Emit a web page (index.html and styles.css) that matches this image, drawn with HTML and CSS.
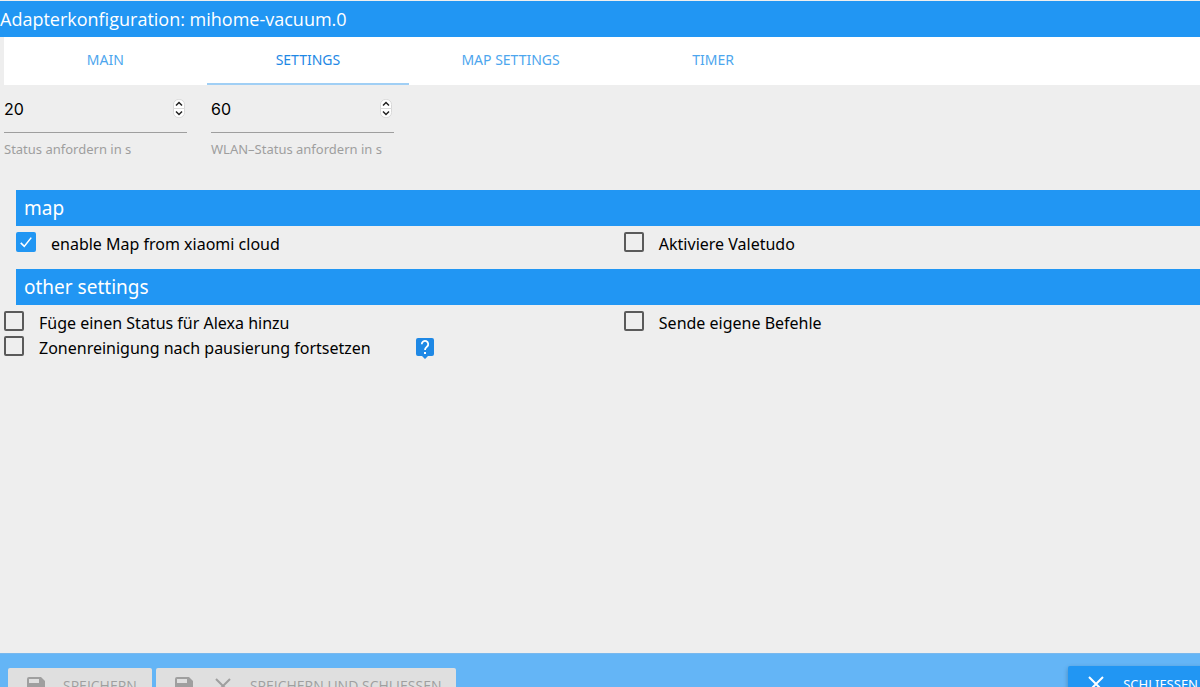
FILE: index.html
```html
<!DOCTYPE html>
<html lang="de">
<head>
<meta charset="utf-8">
<title>Adapterkonfiguration</title>
<link rel="stylesheet" href="styles.css">
</head>
<body>
<div class="page">
  <header class="titlebar"><h1 class="title">Adapterkonfiguration: mihome-vacuum.0</h1></header>
  <nav class="tabs">
    <a class="tab" href="#main">MAIN</a>
    <a class="tab tab-active" href="#settings">SETTINGS</a>
    <a class="tab" href="#map">MAP SETTINGS</a>
    <a class="tab" href="#timer">TIMER</a>
  </nav>
  <main class="content">
    <div class="fields">
      <div class="field">
        <div class="field-box">
          <input class="number" id="status" type="number" value="20">
          <svg class="spinner" viewBox="0 0 12 19" aria-hidden="true"><rect x=".5" y=".5" width="11" height="18" rx="5" fill="#fff" stroke="#d8d8d8"/><path d="M0 9.5h12" stroke="#dcdcdc"/><path d="M3 6.500 6 3.500l3 3M3 12.500l3 3 3-3" fill="none" stroke="#222" stroke-width="1.500"/></svg>
        </div>
        <label class="field-label" for="status">Status anfordern in s</label>
      </div>
      <div class="field">
        <div class="field-box">
          <input class="number" id="wlan" type="number" value="60">
          <svg class="spinner" viewBox="0 0 12 19" aria-hidden="true"><rect x=".5" y=".5" width="11" height="18" rx="5" fill="#fff" stroke="#d8d8d8"/><path d="M0 9.5h12" stroke="#dcdcdc"/><path d="M3 6.500 6 3.500l3 3M3 12.500l3 3 3-3" fill="none" stroke="#222" stroke-width="1.500"/></svg>
        </div>
        <label class="field-label" for="wlan">WLAN–Status anfordern in s</label>
      </div>
    </div>
    <h2 class="section">map</h2>
    <div class="options">
      <label class="option option-indent"><input class="check" type="checkbox" checked><span>enable Map from xiaomi cloud</span></label>
      <label class="option"><input class="check" type="checkbox"><span>Aktiviere Valetudo</span></label>
    </div>
    <h2 class="section">other settings</h2>
    <div class="options">
      <label class="option"><input class="check" type="checkbox"><span>Füge einen Status für Alexa hinzu</span></label>
      <label class="option"><input class="check" type="checkbox"><span>Sende eigene Befehle</span></label>
      <div class="option-help">
        <label class="option"><input class="check" type="checkbox"><span>Zonenreinigung nach pausierung fortsetzen</span></label>
        <a class="help" href="#help" aria-label="Hilfe"><svg width="18" height="21" viewBox="0 0 18 21"><path d="M2 0h14a2 2 0 0 1 2 2v14a2 2 0 0 1-2 2h-4l-3 3-3-3H2a2 2 0 0 1-2-2V2a2 2 0 0 1 2-2z" fill="#1e88e5"/><path d="M5.800 6.200a3.200 3.200 0 1 1 5.300 2.300C9.900 9.600 9 10.200 9 12" fill="none" stroke="#fff" stroke-width="1.800"/><path d="M8 14h2v2H8z" fill="#fff"/></svg></a>
      </div>
    </div>
  </main>
  <footer class="footer">
    <button class="button" disabled>
      <svg class="icon" viewBox="0 0 18 18"><path d="M2 0h12l4 4v12a2 2 0 0 1-2 2H2a2 2 0 0 1-2-2V2a2 2 0 0 1 2-2zm0 2v4h10V2zm7 8a3 3 0 1 0 0 6 3 3 0 0 0 0-6z" fill="currentColor" fill-rule="evenodd"/></svg>
      <span class="button-text">SPEICHERN</span>
    </button>
    <button class="button" disabled>
      <svg class="icon" viewBox="0 0 18 18"><path d="M2 0h12l4 4v12a2 2 0 0 1-2 2H2a2 2 0 0 1-2-2V2a2 2 0 0 1 2-2zm0 2v4h10V2zm7 8a3 3 0 1 0 0 6 3 3 0 0 0 0-6z" fill="currentColor" fill-rule="evenodd"/></svg>
      <svg class="icon icon-second" viewBox="0 0 18 18"><path d="M2 2l14 14M16 2 2 16" stroke="currentColor" stroke-width="2"/></svg>
      <span class="button-text">SPEICHERN UND SCHLIESSEN</span>
    </button>
    <button class="button button-close">
      <svg class="icon" viewBox="0 0 18 18"><path d="M2 2l14 14M16 2 2 16" stroke="currentColor" stroke-width="2"/></svg>
      <span class="button-text">SCHLIESSEN</span>
    </button>
  </footer>
</div>
</body>
</html>
```
FILE: styles.css
```css
* { box-sizing: border-box; }
html { overflow: hidden; }
body {
  margin: 0;
  overflow: hidden;
  background: #eee;
  color: #000;
  font-family: "Noto Sans", "Open Sans", sans-serif;
  font-size: 16px;
}
.page {
  display: flex;
  flex-direction: column;
  min-height: calc(100vh + 30px);
  padding-top: 1px;
}
.titlebar { background: #2196f3; color: #fff; }
.title {
  margin: 0;
  font-family: "Open Sans", sans-serif;
  font-size: 18px;
  font-weight: 400;
  line-height: 36px;
}
.tabs {
  display: flex;
  margin-left: 4px;
  padding-right: 4px;
  background: #fff;
}
.tab {
  width: 17%;
  border-bottom: 2px solid transparent;
  color: #4da6ee;
  font-size: 14px;
  line-height: 46px;
  text-align: center;
  text-decoration: none;
}
.tab-active { border-color: #a0cff5; color: #1e88e5; }
.content { flex: 1; padding-left: 4px; }
.fields { display: flex; gap: 24px; height: 105px; }
.field { width: 183px; }
.field-box { position: relative; }
.number {
  display: block;
  width: 100%;
  height: 48px;
  padding: 0;
  border: 0;
  border-bottom: 1px solid #9e9e9e;
  outline: 0;
  background: transparent;
  color: #000;
  font-family: Inter, sans-serif;
  font-size: 16px;
  appearance: textfield;
}
.number::-webkit-inner-spin-button { display: none; }
.spinner {
  position: absolute;
  top: 14px;
  right: 2px;
  width: 12px;
  height: 19px;
}
.field-label {
  display: block;
  margin-top: 6px;
  color: #9e9e9e;
  font-size: 13px;
  line-height: 20px;
}
.section {
  margin: 0 0 0 12px;
  padding-left: 8px;
  background: #2196f3;
  color: #fff;
  font-size: 19px;
  font-weight: 400;
  line-height: 36px;
}
.options {
  display: grid;
  grid-template-columns: 52% 48%;
  padding: 6px 4px 12px 0;
}
.option {
  display: flex;
  gap: 15px;
  line-height: 25px;
}
.option-indent { padding-left: 12px; }
.option-help { display: flex; gap: 45px; }
.check {
  flex: none;
  width: 20px;
  height: 20px;
  margin: 0;
  border: 2px solid #5a5a5a;
  border-radius: 2px;
  appearance: none;
}
.check:checked {
  border-color: #2196f3;
  background: #2196f3 url("data:image/svg+xml,%3Csvg xmlns='http://www.w3.org/2000/svg' viewBox='0 0 16 16'%3E%3Cpath d='M2 9l4 4 8-10' fill='none' stroke='white' stroke-width='1.800'/%3E%3C/svg%3E") center / 14px no-repeat;
}
.help { display: block; height: 21px; padding-top: 2px; }
.footer {
  display: flex;
  align-items: center;
  gap: 4px;
  height: 64px;
  padding-left: 8px;
  background: #64b5f6;
  border-top: 1px solid #78b8ee;
}
.button {
  display: flex;
  align-items: center;
  height: 36px;
  padding: 0 15px 0 19px;
  border: 0;
  border-radius: 2px;
  background: #dfdfdf;
  color: #9f9f9f;
  font-family: "Open Sans", sans-serif;
  font-size: 14px;
  white-space: nowrap;
}
.icon { width: 18px; height: 18px; }
.icon-second { margin-left: 21px; }
.button-text { margin-left: 18px; }
.button-close {
  margin: 0 -16px 4px auto;
  padding-right: 18px;
  background: #2196f3;
  color: #fff;
  font-family: "Noto Sans", sans-serif;
  font-size: 13px;
  box-shadow: 0 2px 5px #0004;
}
```
